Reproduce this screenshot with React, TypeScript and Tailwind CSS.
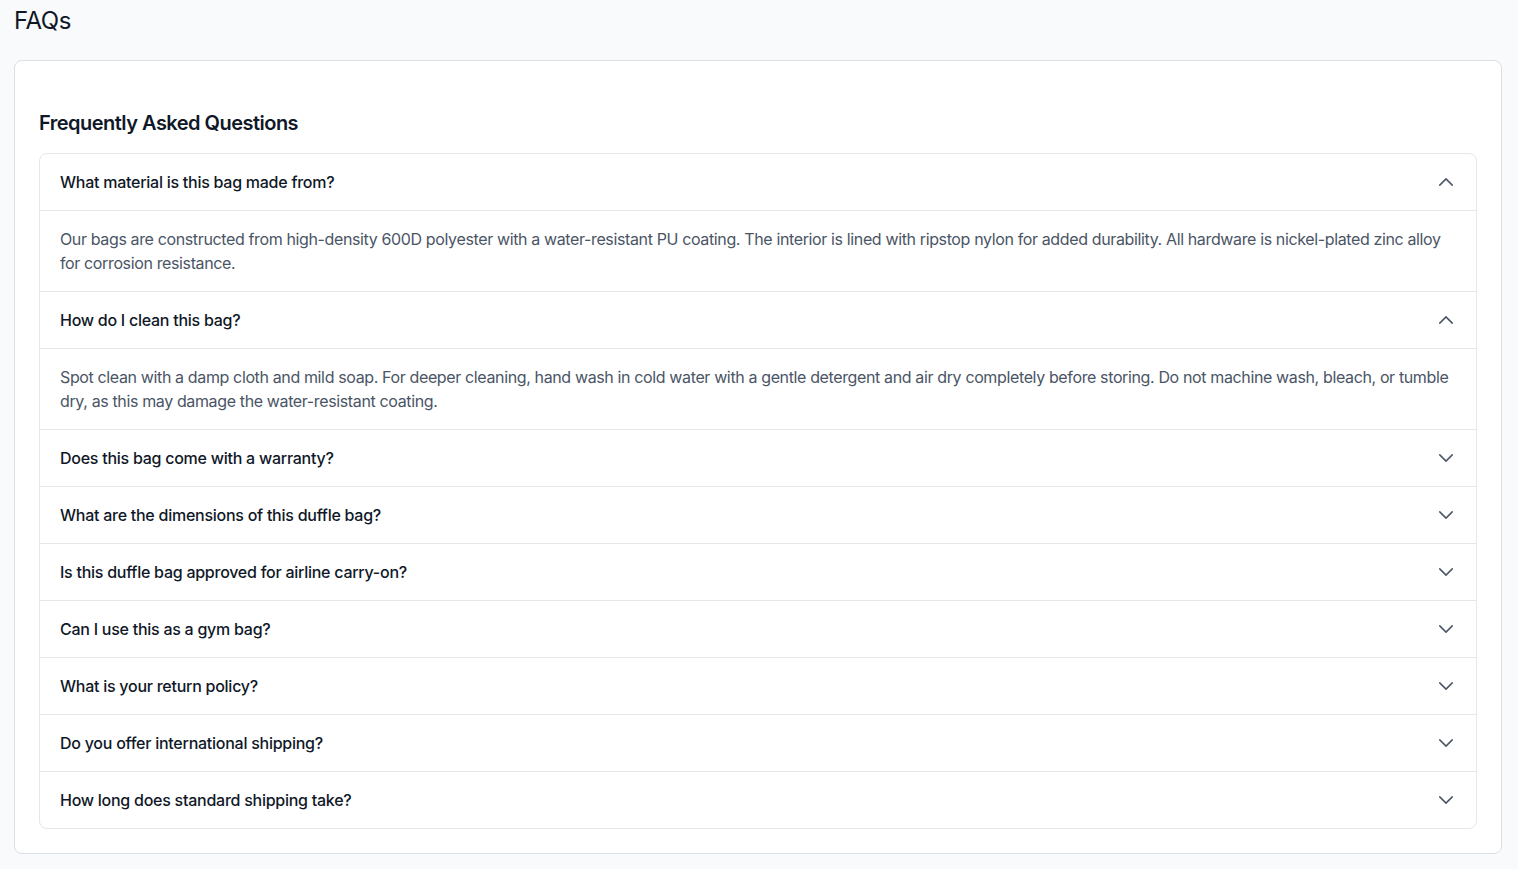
import { useState } from "react"

const faqs = [
  {
    q: "What material is this bag made from?",
    a: "Our bags are constructed from high-density 600D polyester with a water-resistant PU coating. The interior is lined with ripstop nylon for added durability. All hardware is nickel-plated zinc alloy for corrosion resistance.",
  },
  {
    q: "How do I clean this bag?",
    a: "Spot clean with a damp cloth and mild soap. For deeper cleaning, hand wash in cold water with a gentle detergent and air dry completely before storing. Do not machine wash, bleach, or tumble dry, as this may damage the water-resistant coating.",
  },
  {
    q: "Does this bag come with a warranty?",
    a: "Yes, every bag is covered by a 2-year limited warranty against manufacturing defects.",
  },
  {
    q: "What are the dimensions of this duffle bag?",
    a: "The duffle measures 22\" x 12\" x 11\" with a capacity of 45 liters.",
  },
  {
    q: "Is this duffle bag approved for airline carry-on?",
    a: "It meets the carry-on size limits of most major airlines.",
  },
  {
    q: "Can I use this as a gym bag?",
    a: "Absolutely. The separate shoe compartment keeps gear organized.",
  },
  {
    q: "What is your return policy?",
    a: "Unused items can be returned within 30 days for a full refund.",
  },
  {
    q: "Do you offer international shipping?",
    a: "Yes, we ship to over 50 countries worldwide.",
  },
  {
    q: "How long does standard shipping take?",
    a: "Standard shipping usually takes 3-5 business days.",
  },
]

function Chevron({ open }: { open: boolean }) {
  return (
    <svg
      viewBox="0 0 24 24"
      fill="none"
      stroke="currentColor"
      strokeWidth={1.8}
      className={`w-5 h-5 text-gray-600 ${open ? "rotate-180" : ""}`}
    >
      <path strokeLinecap="round" strokeLinejoin="round" d="m19.5 8.25-7.5 7.5-7.5-7.5" />
    </svg>
  )
}

export default function App() {
  const [open, setOpen] = useState<number[]>([0, 1])

  const toggle = (i: number) =>
    setOpen((prev) => (prev.includes(i) ? prev.filter((x) => x !== i) : [...prev, i]))

  return (
    <div
      className="min-h-screen bg-[#f9fafb] pl-[14px] pr-[16px] pt-[5px] pb-[15px]"
      style={{ fontFamily: "Inter, 'Noto Sans', sans-serif" }}
    >
      <h1 className="text-2xl leading-8 text-gray-900 tracking-[-0.02em] mb-[23px]">FAQs</h1>

      {/* Card */}
      <div className="bg-white border border-[#dcdfe4] rounded-lg px-6 pt-12 pb-6">
        <h2 className="text-xl leading-7 font-semibold text-gray-900 tracking-[-0.026em] mb-4">
          Frequently Asked Questions
        </h2>

        <div className="border border-gray-200 rounded-lg divide-y divide-gray-200">
          {faqs.map((item, i) => {
            const isOpen = open.includes(i)
            return (
              <div key={item.q}>
                <button
                  onClick={() => toggle(i)}
                  className="w-full h-14 px-5 flex items-center justify-between text-left"
                >
                  <span className="text-base font-medium text-gray-900 tracking-[-0.016em]">
                    {item.q}
                  </span>
                  <Chevron open={isOpen} />
                </button>
                {isOpen && (
                  <div className="border-t border-gray-200 px-5 py-4 text-base leading-6 text-gray-600 tracking-[-0.023em]">
                    {item.a}
                  </div>
                )}
              </div>
            )
          })}
        </div>
      </div>
    </div>
  )
}
